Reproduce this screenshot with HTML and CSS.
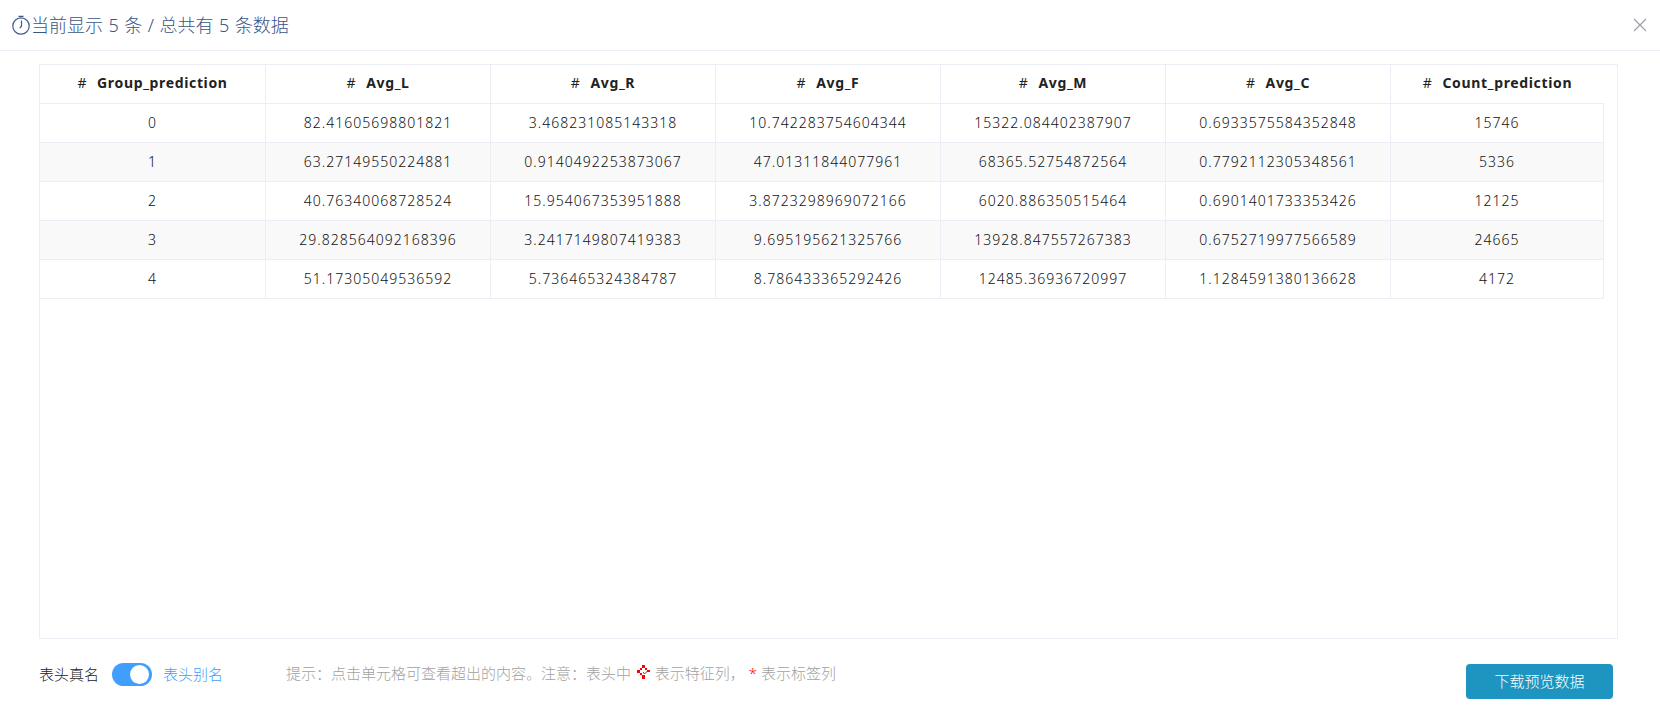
FILE: index.html
```html
<!DOCTYPE html>
<html lang="zh-CN">
<head>
<meta charset="utf-8">
<title>预览数据</title>
<link rel="stylesheet" href="styles.css">
</head>
<body>
<div class="dialog">
  <header class="head">
    <div class="title">
      <svg class="clock" width="20" height="20" viewBox="0 0 20 20" fill="none" stroke="#3f5a8a" stroke-width="1.2">
        <circle cx="10" cy="11" r="8.2"/>
        <path d="M7.5 1.4h5M10.5 5.5v5.7l-1.8 1.9"/>
      </svg>
      <span class="title-text">当前显示 5 条 / 总共有 5 条数据</span>
    </div>
    <svg class="close" width="14" height="14" viewBox="0 0 14 14" fill="none" stroke="#9a9da3" stroke-width="1.1">
      <path d="M1 1l12 12M13 1L1 13"/>
    </svg>
  </header>
  <main class="grid-box">
    <div class="row">
      <div class="cell hcell"><span class="hash">#</span>Group_prediction</div>
      <div class="cell hcell"><span class="hash">#</span>Avg_L</div>
      <div class="cell hcell"><span class="hash">#</span>Avg_R</div>
      <div class="cell hcell"><span class="hash">#</span>Avg_F</div>
      <div class="cell hcell"><span class="hash">#</span>Avg_M</div>
      <div class="cell hcell"><span class="hash">#</span>Avg_C</div>
      <div class="cell hcell"><span class="hash">#</span>Count_prediction</div>
    </div>
    <div class="row">
      <div class="cell">0</div><div class="cell">82.41605698801821</div><div class="cell">3.468231085143318</div><div class="cell">10.742283754604344</div><div class="cell">15322.084402387907</div><div class="cell">0.6933575584352848</div><div class="cell">15746</div>
    </div>
    <div class="row even">
      <div class="cell">1</div><div class="cell">63.27149550224881</div><div class="cell">0.9140492253873067</div><div class="cell">47.01311844077961</div><div class="cell">68365.52754872564</div><div class="cell">0.7792112305348561</div><div class="cell">5336</div>
    </div>
    <div class="row">
      <div class="cell">2</div><div class="cell">40.76340068728524</div><div class="cell">15.954067353951888</div><div class="cell">3.8723298969072166</div><div class="cell">6020.886350515464</div><div class="cell">0.6901401733353426</div><div class="cell">12125</div>
    </div>
    <div class="row even">
      <div class="cell">3</div><div class="cell">29.828564092168396</div><div class="cell">3.2417149807419383</div><div class="cell">9.695195621325766</div><div class="cell">13928.847557267383</div><div class="cell">0.6752719977566589</div><div class="cell">24665</div>
    </div>
    <div class="row">
      <div class="cell">4</div><div class="cell">51.17305049536592</div><div class="cell">5.736465324384787</div><div class="cell">8.786433365292426</div><div class="cell">12485.36936720997</div><div class="cell">1.1284591380136628</div><div class="cell">4172</div>
    </div>
  </main>
  <footer class="foot">
    <div class="switch-wrap">
      <span class="sw-label">表头真名</span>
      <span class="switch"><span class="knob"></span></span>
      <span class="sw-label active">表头别名</span>
    </div>
    <p class="tip">提示：点击单元格可查看超出的内容。注意：表头中
      <svg class="feat" width="13" height="15" viewBox="0 0 13 15"><path fill="#f00" d="M5 0h3v3H5zM3 3h2v2H3zM8 3h2v2H8zM0 5h3v3H0zM10 5h3v2h-3zM3 8h2v2H3zM5 10h3v4H5z"/><path fill="none" stroke="#f00" d="M6 7l1.5 2 3-3"/></svg>
      表示特征列， <span class="star">*</span> 表示标签列</p>
    <button class="btn" type="button">下载预览数据</button>
  </footer>
</div>
</body>
</html>
```

FILE: styles.css
```css
* { box-sizing: border-box; }
html, body { margin: 0; padding: 0; }
body {
  width: 1660px;
  height: 722px;
  overflow: hidden;
  background: #fff;
  font-family: "Noto Sans", "Noto Sans CJK SC", sans-serif;
}
.dialog { display: flex; flex-direction: column; height: 722px; }
.head {
  height: 51px;
  flex: none;
  display: flex;
  align-items: center;
  justify-content: space-between;
  padding: 0 13px 1px 11px;
  border-bottom: 1px solid #ebeef5;
}
.title {
  display: flex;
  align-items: center;
  color: #3a5484;
  font-size: 18px;
  font-weight: 300;
  word-spacing: 0.8px;
}
.title-text { padding-bottom: 2px; }
.clock { flex: none; }
.close { flex: none; }
.grid-box {
  flex: none;
  width: 1579px;
  height: 575px;
  margin: 13px 0 0 39px;
  border: 1px solid #ebeef5;
}
.row { display: flex; height: 39px; width: 1564px; }
.even { background: #f9f9f9; }
.cell {
  width: 225px;
  flex: none;
  display: flex;
  align-items: center;
  justify-content: center;
  padding-bottom: 2px;
  color: #111;
  font-size: 14px;
  font-weight: 300;
  letter-spacing: 1px;
  border-right: 1px solid #ebeef5;
  border-bottom: 1px solid #ebeef5;
}
.cell:first-child { width: 226px; }
.cell:last-child { flex: 1; width: auto; }
.hcell { font-weight: 700; letter-spacing: 0.65px; color: #222; padding-bottom: 3px; }
.hcell:last-child { border-right: 0; }
.hash { margin-right: 10px; font-weight: 400; }
.foot {
  flex: none;
  display: flex;
  align-items: flex-start;
  padding: 24px 0 0 39px;
}
.switch-wrap { display: flex; align-items: center; height: 23px; width: 247px; flex: none; }
.sw-label { font-size: 15px; font-weight: 300; color: #222; padding-bottom: 2px; }
.sw-label.active { color: #409eff; }
.switch {
  flex: none;
  width: 40px;
  height: 23px;
  border-radius: 12px;
  background: #409eff;
  margin: 0 11px 0 13px;
  display: flex;
  justify-content: flex-end;
  align-items: center;
  padding-right: 3px;
}
.knob { width: 19px; height: 19px; border-radius: 50%; background: #fff; }
.tip {
  margin: -1px 0 0;
  width: 1180px;
  flex: none;
  font-size: 15px;
  font-weight: 300;
  color: #a2a2a2;
  line-height: 23px;
}
.feat { vertical-align: -1px; margin: 0 1px 0 2px; }
.star { color: #f00; }
.btn {
  flex: none;
  width: 147px;
  height: 35px;
  margin-top: 1px;
  padding: 0 0 2px;
  border: 0;
  border-radius: 4px;
  background: #1e95c0;
  color: #fff;
  font-family: inherit;
  font-size: 15px;
  font-weight: 300;
}
```
